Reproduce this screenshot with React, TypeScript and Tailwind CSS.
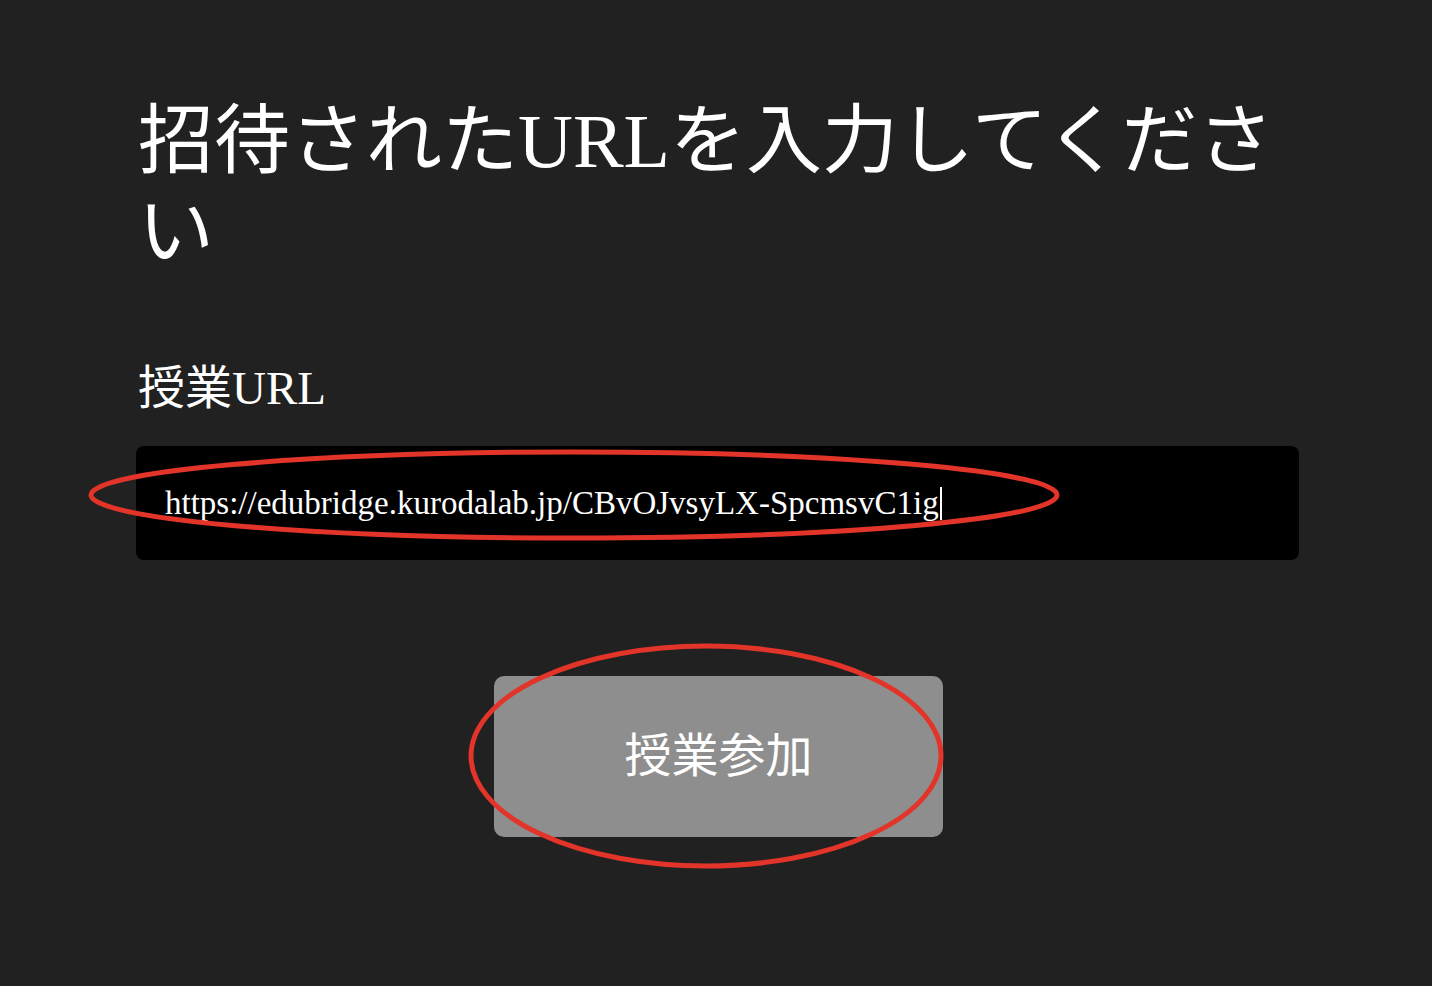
const serif = "font-['Liberation_Serif','Noto_Sans_CJK_JP',serif]";

function Annotations() {
  return (
    <svg className="pointer-events-none absolute left-0 top-0" width="1432" height="986" viewBox="0 0 1432 986">
      <ellipse cx="574" cy="495" rx="483" ry="43" fill="none" stroke="#e3342a" strokeWidth="5" />
      <ellipse cx="706" cy="756" rx="235" ry="110" fill="none" stroke="#e3342a" strokeWidth="5" />
    </svg>
  );
}

export default function App() {
  return (
    <div className={`relative min-h-screen w-full bg-[#212121] text-white ${serif}`}>
      <div className="ml-[136px] flex w-[1163px] flex-col pl-[2px] pt-[96px]">
        {/* heading */}
        <h1 className="text-[76px] leading-[91px] font-normal">招待されたURLを入力してください</h1>

        {/* url field */}
        <label className="mt-[82px] text-[47px] leading-[56px]">授業URL</label>
        <div className="-ml-[2px] mt-[30px] flex h-[114px] items-center rounded-[8px] bg-black pl-[29px]">
          <span className="whitespace-nowrap text-[33px] leading-none">https://edubridge.kurodalab.jp/CBvOJvsyLX-SpcmsvC1ig</span>
          <span className="ml-[1px] h-[33px] w-[2px] bg-white" />
        </div>

        {/* submit */}
        <div className="mt-[116px] flex justify-center">
          <button className="flex h-[161px] w-[449px] items-center justify-center rounded-[10px] bg-[#8e8e8e] text-[47px] text-white">
            授業参加
          </button>
        </div>
      </div>
      <Annotations />
    </div>
  );
}
